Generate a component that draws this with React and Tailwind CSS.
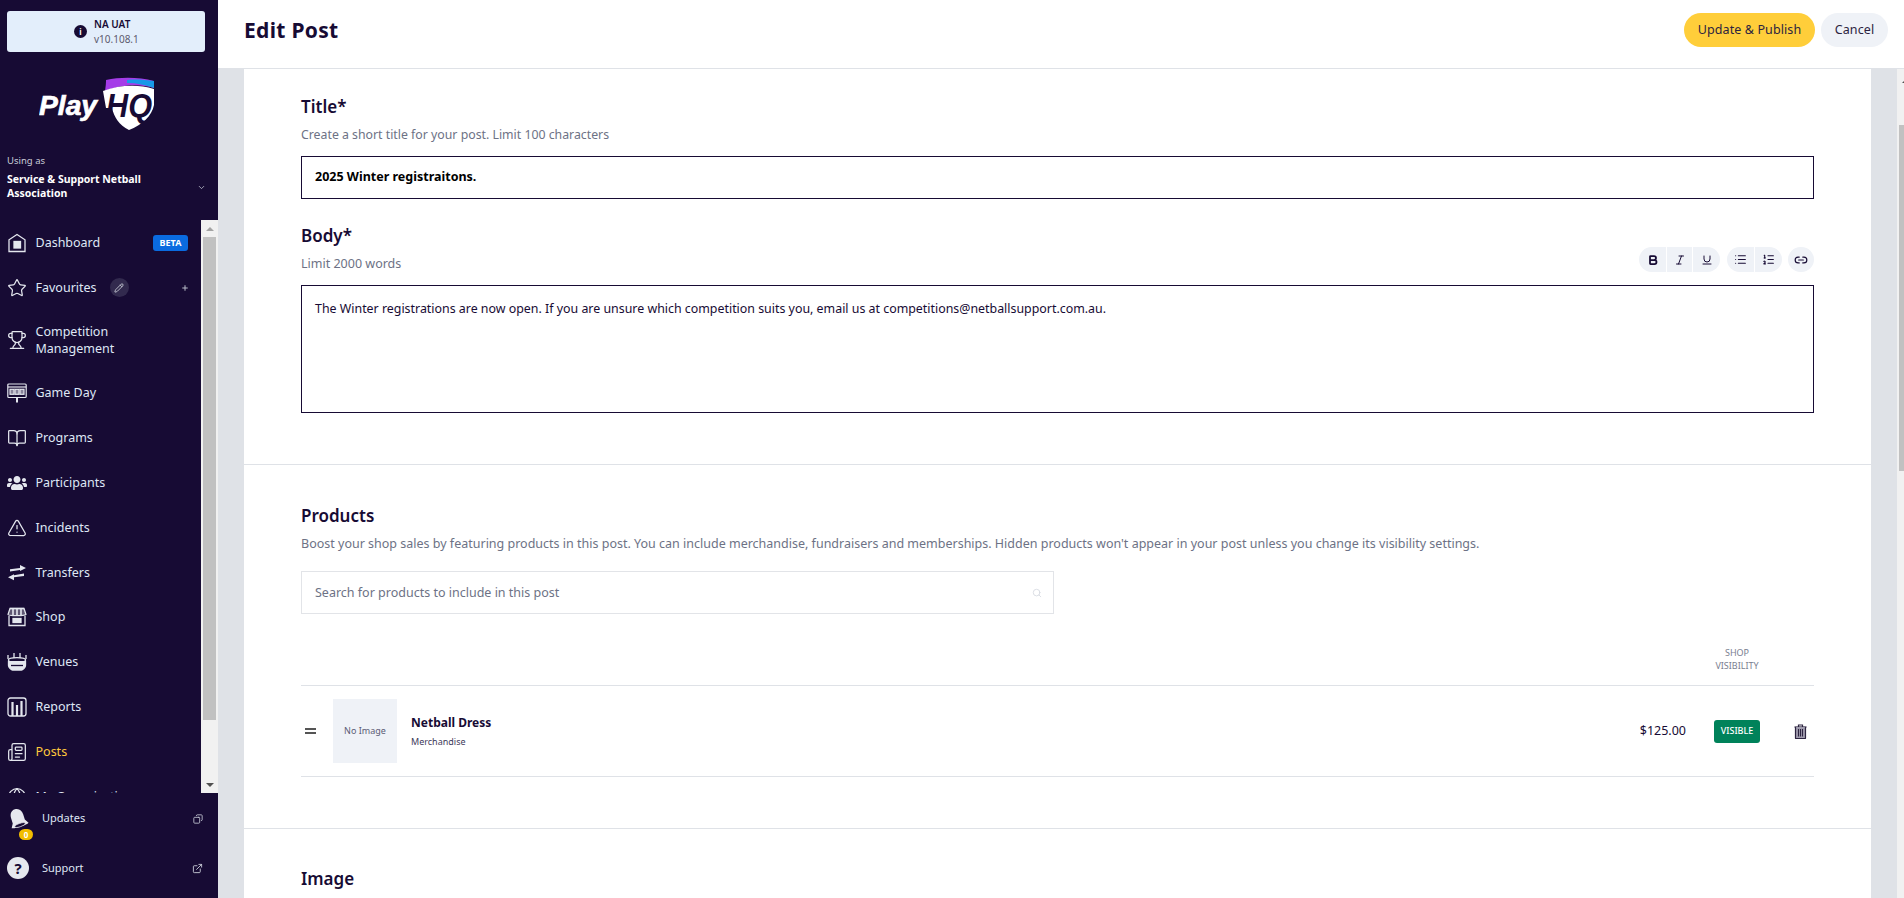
import React from "react";
import { Star, Trophy, BookOpen, TriangleAlert, Newspaper, Globe, ExternalLink, Copy, Pencil, Plus, ChevronDown, Bold, Italic, Underline, List, ListOrdered, Link2, Search } from "lucide-react";
import { FaUsers } from "react-icons/fa";

const font = { fontFamily: '"Noto Sans", sans-serif' };

function HomeIcon() {
  return (
    <svg width="20" height="20" viewBox="0 0 20 20" fill="none" stroke="currentColor" strokeWidth="1.3">
      <path d="M2 18.5V6.8L10 1.5l8 5.3v11.7z" />
      <rect x="7" y="8.5" width="6.5" height="6.5" fill="currentColor" />
    </svg>
  );
}
function GameDayIcon() {
  return (
    <svg width="20" height="20" viewBox="0 0 20 20" fill="none" stroke="currentColor" strokeWidth="1.2">
      <rect x="0.8" y="1" width="18.4" height="13.5" rx="1" />
      <path d="M1 4h18" />
      <rect x="3" y="6.3" width="4" height="5" fill="currentColor" fillOpacity="0.55" />
      <rect x="8" y="6.3" width="4" height="5" fill="currentColor" fillOpacity="0.55" />
      <rect x="13" y="6.3" width="4" height="5" fill="currentColor" fillOpacity="0.55" />
      <path d="M10 14.5v5" strokeWidth="2" />
    </svg>
  );
}
function TransferIcon() {
  return (
    <svg width="20" height="20" viewBox="0 0 20 20" fill="currentColor">
      <path d="M3 9.6V7.3L13 6V3l6 3-6 3V7.9z" />
      <path d="M17 11.6v2.3L7 15.2v3l-6-3 6-3v1.1z" />
    </svg>
  );
}
function ShopIcon() {
  return (
    <svg width="20" height="20" viewBox="0 0 20 20" fill="none" stroke="currentColor" strokeWidth="1.3">
      <path d="M3 1.5h14" />
      <path d="M3 1.5L1 7.5c0 1.5 18 1.5 18 0l-2-6z" fill="currentColor" fillOpacity="0.35" />
      <path d="M6 2v6M10 2v6M14 2v6" strokeWidth="1.6" />
      <path d="M2 9v9.5h16V9" />
      <rect x="6" y="11.5" width="8" height="4" fill="currentColor" />
    </svg>
  );
}
function VenueIcon() {
  return (
    <svg width="20" height="20" viewBox="0 0 20 20" fill="none" stroke="currentColor" strokeWidth="1.3">
      <path d="M1 3v4M7 1v5M13 1v5M19 3v4" />
      <ellipse cx="10" cy="8" rx="8.6" ry="2.4" />
      <path d="M1.5 9v4.5c0 2 3 4.5 4 4.5h9c1 0 4-2.5 4-4.5V9" fill="currentColor" />
      <path d="M4 13.5h12" stroke="#170b34" />
    </svg>
  );
}
function ReportIcon() {
  return (
    <svg width="20" height="20" viewBox="0 0 20 20" fill="none" stroke="currentColor" strokeWidth="1.3">
      <rect x="1" y="1" width="18" height="18" rx="2.5" />
      <path d="M5.5 5v14M10 8v11M14.5 4v15" strokeWidth="2.2" />
    </svg>
  );
}
function BellIcon() {
  return (
    <svg width="26" height="28" viewBox="0 0 26 28" className="-rotate-[18deg]">
      <path d="M13 2c5 0 7.5 4 7.5 9v6l3 5c-3 2-17 2-21 0l3-5v-6c0-5 2.500-9 7.500-9z" fill="#e6e8ee" />
      <ellipse cx="13" cy="21.500" rx="6.500" ry="2" fill="#170b34" stroke="#e6e8ee" strokeWidth="0.8" />
    </svg>
  );
}
function TrashIcon() {
  return (
    <svg width="13" height="15" viewBox="0 0 13 15" fill="none" stroke="#2c2440" strokeWidth="1.2">
      <path d="M0.500 3h12" />
      <path d="M4.500 3V1h4v2" />
      <path d="M1.500 3v11c0 .5.3.7.7.7h8.600c.4 0 .7-.2.7-.7V3" fill="#a09cae" />
      <path d="M4.500 5v7.500M6.500 5v7.500M8.500 5v7.500" strokeWidth="1.1" />
    </svg>
  );
}
function Logo() {
  const face = { fontFamily: '"Liberation Sans", sans-serif' };
  return (
    <svg width="120" height="56" viewBox="0 0 120 56">
      <text x="0" y="38" fill="#fff" stroke="#fff" strokeWidth="0.7" fontSize="28" fontWeight="700" fontStyle="italic" textLength="58" lengthAdjust="spacingAndGlyphs" style={face}>Play</text>
      <path d="M66 14C67 8 67 5 67 3c14-3 33-3 48 1v7C99 6 80 8 66 14z" fill="#a53ce8" />
      <path d="M88 3c9-1 19 0 27 1v7c-8-3-17-5-27-5z" fill="#1899e8" />
      <path d="M64 14c16-6 35-7 51-2v16c-2 11-12 20-25 25-10-5-15-13-17-22H67z" fill="#fff" />
      <text x="67" y="40" fill="#170b34" fontSize="33" fontWeight="700" fontStyle="italic" textLength="46" lengthAdjust="spacingAndGlyphs" style={face}>HQ</text>
    </svg>
  );
}

const items = [
  { label: "Dashboard", icon: <HomeIcon />, beta: true },
  { label: "Favourites", icon: <Star size={20} strokeWidth={1.5} />, fav: true },
  { label: "Competition Management", icon: <Trophy size={20} strokeWidth={1.5} />, tall: true },
  { label: "Game Day", icon: <GameDayIcon /> },
  { label: "Programs", icon: <BookOpen size={20} strokeWidth={1.5} /> },
  { label: "Participants", icon: <FaUsers size={20} /> },
  { label: "Incidents", icon: <TriangleAlert size={20} strokeWidth={1.5} /> },
  { label: "Transfers", icon: <TransferIcon />, short: true },
  { label: "Shop", icon: <ShopIcon /> },
  { label: "Venues", icon: <VenueIcon /> },
  { label: "Reports", icon: <ReportIcon /> },
  { label: "Posts", icon: <Newspaper size={20} strokeWidth={1.5} />, active: true },
  { label: "My Organisation", icon: <Globe size={20} strokeWidth={1.5} />, plus: true },
];

function NavRow({ item }) {
  const h = item.tall ? "h-[60px]" : item.short ? "h-[44px]" : "h-[45px]";
  return (
    <div className={`${h} shrink-0 flex items-center pl-[7px] pr-[13px] text-[#dfe7f5]`}>
      <span className="w-[20px] h-[20px] flex items-center justify-center shrink-0 text-[#e4e7ee]">{item.icon}</span>
      <span className={`ml-[8.500px] text-[12.5px] leading-[17px] ${item.active ? "text-[#ffc93c]" : ""} ${item.tall ? "w-[110px]" : ""}`}>{item.label}</span>
      {item.beta && <span className="ml-auto w-[35px] h-[16px] rounded-[3px] bg-[#0a6be0] text-white text-[9px] font-bold flex items-center justify-center">BETA</span>}
      {item.fav && (
        <>
          <span className="ml-[13px] w-[19px] h-[19px] rounded-full bg-[#322a4e] flex items-center justify-center">
            <Pencil size={10} className="text-[#cfd2db]" />
          </span>
          <Plus size={8} strokeWidth={3} className="ml-auto -mr-px text-[#b9bcc8]" />
        </>
      )}
      {item.plus && <Plus size={8} strokeWidth={3} className="ml-auto -mr-px text-[#b9bcc8]" />}
    </div>
  );
}

function Sidebar() {
  return (
    <aside className="w-[218px] h-full shrink-0 bg-[#170b34] flex flex-col">
      <div className="h-[220px] shrink-0 pt-[11px] relative">
        <div className="mx-[7px] w-[198px] h-[41px] rounded-[3px] bg-[#e3eefb] flex items-center pl-[67px]">
          <span className="w-[13px] h-[13px] rounded-full bg-[#170b34] text-white text-[8px] font-bold flex items-center justify-center">i</span>
          <div className="ml-[7px]">
            <div className="text-[10px] leading-[15px] font-semibold text-[#170b34]">NA UAT</div>
            <div className="text-[10px] leading-[14px] text-[#5d5a6e]">v10.108.1</div>
          </div>
        </div>
        <div className="mt-[25px] ml-[39px]"><Logo /></div>
        <div className="mt-[21px] pl-[7px] flex pr-[12px]">
          <div className="flex-1">
            <div className="text-[9.5px] leading-[14px] text-[#c9cdd8]">Using as</div>
            <div className="mt-[5px] text-[10.5px] leading-[13.500px] font-bold text-white w-[160px]">Service &amp; Support Netball Association</div>
          </div>
          <ChevronDown size={9} className="self-end mb-[8px] text-[#c9cdd8]" />
        </div>
      </div>
      <div className="flex-1 min-h-0 flex overflow-hidden">
        <div className="flex-1 min-w-0 flex flex-col overflow-hidden">
          {items.map((it) => <NavRow key={it.label} item={it} />)}
        </div>
        <div className="w-[17px] shrink-0 bg-[#f1f1f1] flex flex-col items-center">
          <div className="h-[17px] flex items-center justify-center shrink-0">
            <div className="w-0 h-0 border-x-[4px] border-x-transparent border-b-[4px] border-b-[#a3a3a3]" />
          </div>
          <div className="w-[13px] h-[483px] bg-[#c1c1c1]" />
          <div className="mt-auto h-[17px] flex items-center justify-center shrink-0">
            <div className="w-0 h-0 border-x-[4px] border-x-transparent border-t-[4px] border-t-[#505050]" />
          </div>
        </div>
      </div>
      <div className="h-[105px] shrink-0 pl-[7px] pr-[15px] flex flex-col">
        <div className="h-[50px] pt-[1px] flex items-center text-[#dfe7f5]">
          <span className="relative w-[22px] h-[24px] flex items-center justify-center">
            <BellIcon />
            <span className="absolute left-[12px] top-[22px] w-[14px] h-[11px] rounded-full bg-[#f2bd00] text-white text-[8px] font-bold leading-[11px] text-center">0</span>
          </span>
          <span className="ml-[13px] text-[11px]">Updates</span>
          <Copy size={10} className="ml-auto text-[#c9cdd8] -scale-x-100" />
        </div>
        <div className="h-[50px] flex items-center text-[#dfe7f5]">
          <span className="w-[22px] h-[22px] rounded-full bg-[#e6e8ee] text-[#170b34] text-[15px] font-bold flex items-center justify-center">?</span>
          <span className="ml-[13px] text-[11px]">Support</span>
          <ExternalLink size={11} className="ml-auto text-[#c9cdd8]" />
        </div>
      </div>
    </aside>
  );
}

function ToolBtn({ children, cls }) {
  return <div className={`h-[25px] bg-[#eff2f7] flex items-center justify-center text-[#170b34] ${cls}`}>{children}</div>;
}

function Toolbar() {
  return (
    <div className="flex items-center">
      <ToolBtn cls="w-[27px] rounded-l-full"><Bold size={12} strokeWidth={3.5} /></ToolBtn>
      <ToolBtn cls="w-[25px] ml-px"><Italic size={12} strokeWidth={2} /></ToolBtn>
      <ToolBtn cls="w-[27px] ml-px rounded-r-full"><Underline size={12} strokeWidth={2} /></ToolBtn>
      <ToolBtn cls="w-[27px] ml-[7px] rounded-l-full"><List size={13} strokeWidth={2} /></ToolBtn>
      <ToolBtn cls="w-[27px] ml-px rounded-r-full"><ListOrdered size={13} strokeWidth={2} /></ToolBtn>
      <ToolBtn cls="w-[26px] ml-[6px] rounded-full"><Link2 size={14} strokeWidth={2} /></ToolBtn>
    </div>
  );
}

function Main() {
  return (
    <div className="flex-1 min-w-0 h-full flex flex-col">
      <header className="h-[69px] shrink-0 bg-white border-b border-[#dfe2e7] flex items-start pt-[13px] pl-[26px] pr-[16px]">
        <h1 className="text-[21px] leading-[34px] font-bold text-[#170b34] tracking-[0.3px]">Edit Post</h1>
        <button className="ml-auto w-[131px] h-[34px] rounded-full bg-[#ffce3a] text-[#2c2440] text-[12.5px] tracking-[0.1px]">Update &amp; Publish</button>
        <button className="ml-[6px] w-[67px] h-[34px] rounded-full bg-[#eff2f7] text-[#2c2440] text-[12.5px] tracking-[0.1px]">Cancel</button>
      </header>
      <div className="flex-1 min-h-0 flex bg-[#dfe2e7] overflow-hidden">
        <div className="ml-[26px] w-[1627px] shrink-0 bg-white h-full overflow-hidden">
          <section className="px-[57px] pt-[26px] pb-[51px] border-b border-[#dfe2e7]">
            <h2 className="text-[17px] leading-[24px] font-semibold text-[#170b34]">Title*</h2>
            <p className="mt-[6px] text-[12.3px] leading-[20px] text-[#6d7285]">Create a short title for your post. Limit 100 characters</p>
            <div className="mt-[11px] h-[43px] border border-[#170b34] flex items-center px-[13px] text-[12.5px] font-bold text-black">2025 Winter registraitons.</div>
            <h2 className="mt-[25px] text-[17px] leading-[24px] font-semibold text-[#170b34]">Body*</h2>
            <div className="-mt-px h-[27px] flex justify-between items-start">
              <p className="pt-[7px] text-[12.5px] leading-[20px] text-[#6d7285]">Limit 2000 words</p>
              <Toolbar />
            </div>
            <div className="mt-[11px] h-[128px] border border-[#170b34] px-[13px] pt-[13px] text-[12.4px] leading-[20px] text-[#170b34]">The Winter registrations are now open. If you are unsure which competition suits you, email us at competitions@netballsupport.com.au.</div>
          </section>
          <section className="px-[57px] pt-[39px] pb-[51px] border-b border-[#dfe2e7]">
            <h2 className="text-[17px] leading-[24px] font-semibold text-[#170b34]">Products</h2>
            <p className="mt-[6px] text-[12.5px] leading-[20px] text-[#6d7285]">Boost your shop sales by featuring products in this post. You can include merchandise, fundraisers and memberships. Hidden products won't appear in your post unless you change its visibility settings.</p>
            <div className="mt-[17px] w-[753px] h-[43px] border border-[#e2e4e8] flex items-center pl-[13px] pr-[11px] pt-px text-[12.5px] text-[#6d7285]">
              <span>Search for products to include in this post</span>
              <Search size={10} className="ml-auto text-[#d5d9e0]" />
            </div>
            <div className="mt-[32px] pb-[13px] border-b border-[#dfe2e7] flex justify-end pr-[54px]">
              <div className="w-[46px] flex justify-center">
                <div className="text-[9px] leading-[13px] text-[#7a7e90] text-center whitespace-nowrap">SHOP<br />VISIBILITY</div>
              </div>
            </div>
            <div className="h-[91px] border-b border-[#dfe2e7] flex items-center">
              <span className="ml-[4px] w-[11px] flex flex-col gap-[2px]">
                <span className="h-[2px] bg-[#555]" />
                <span className="h-[2px] bg-[#555]" />
              </span>
              <div className="ml-[17px] w-[64px] h-[64px] bg-[#eff2f7] flex items-center justify-center text-[9px] text-[#5b5c75]">No Image</div>
              <div className="ml-[14px]">
                <div className="text-[12px] leading-[16px] font-bold text-[#170b34]">Netball Dress</div>
                <div className="mt-[4px] text-[9px] leading-[13px] text-[#3e3a5a]">Merchandise</div>
              </div>
              <span className="ml-auto text-[12.5px] text-[#170b34]">$125.00</span>
              <span className="ml-[28px] w-[46px] h-[23px] rounded-[3px] bg-[#00825a] text-white text-[9px] font-medium flex items-center justify-center">VISIBLE</span>
              <span className="ml-[34px] mr-[7px] flex"><TrashIcon /></span>
            </div>
          </section>
          <section className="px-[57px] pt-[38px]">
            <h2 className="text-[17px] leading-[24px] font-semibold text-[#170b34]">Image</h2>
          </section>
        </div>
        <div className="ml-auto w-[7px] shrink-0 bg-[#f1f1f1] h-full flex flex-col items-end overflow-hidden">
          <div className="h-[56px] pt-[10px] pl-[5px] shrink-0 w-full">
            <div className="w-0 h-0 border-x-[4px] border-x-transparent border-b-[4px] border-b-[#505050]" />
          </div>
          <div className="w-[5px] h-[346px] bg-[#c1c1c1]" />
        </div>
      </div>
    </div>
  );
}

export default function App() {
  return (
    <div className="w-[1904px] h-[898px] flex overflow-hidden bg-white" style={font}>
      <Sidebar />
      <Main />
    </div>
  );
}
